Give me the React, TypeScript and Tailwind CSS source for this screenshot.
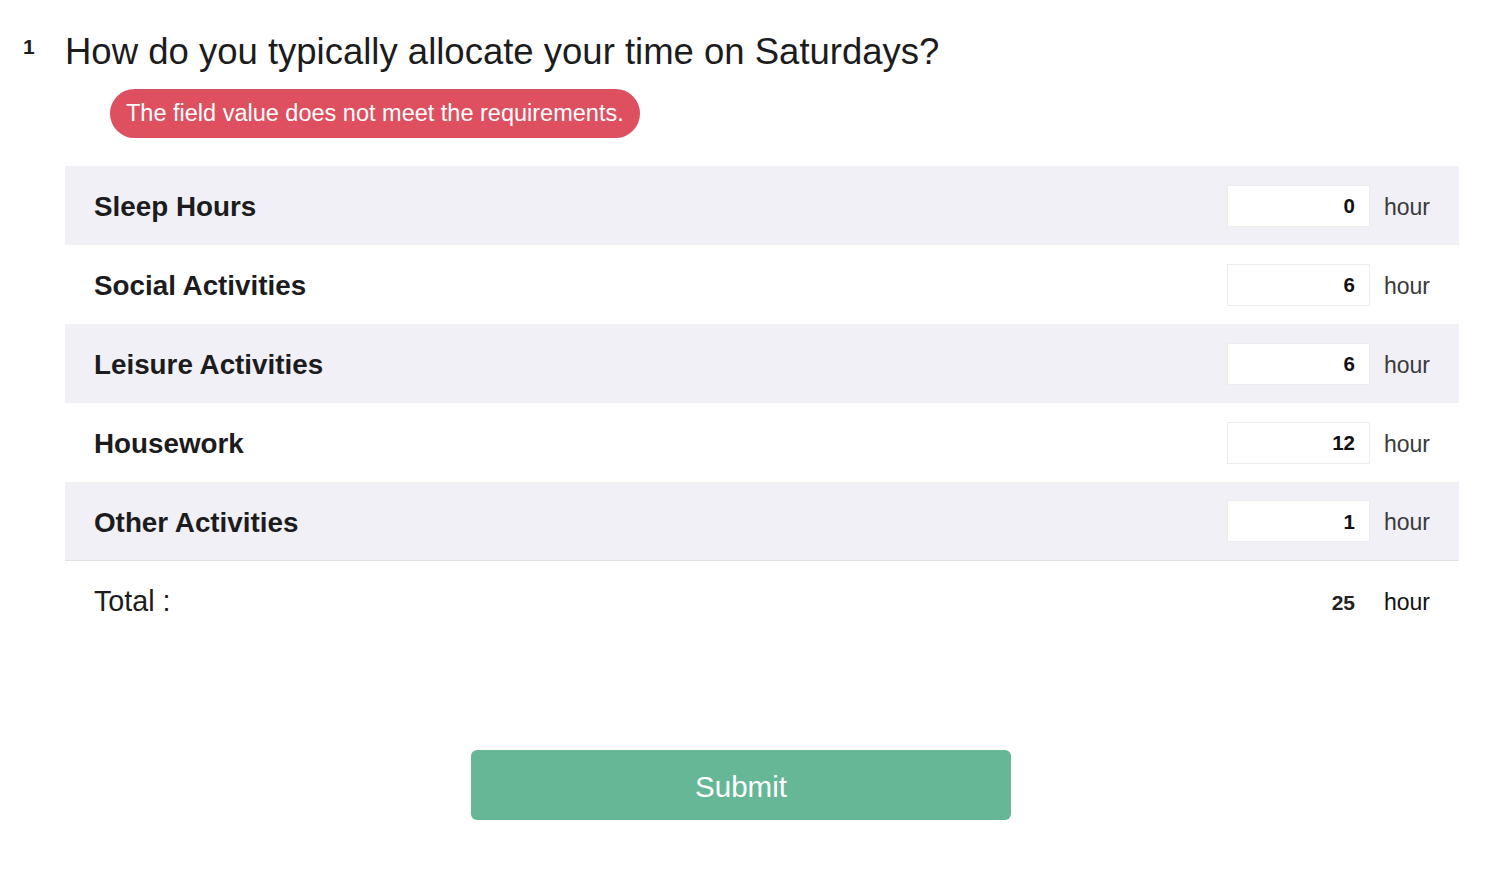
import React from "react";

const rows = [
  { label: "Sleep Hours", value: "0" },
  { label: "Social Activities", value: "6" },
  { label: "Leisure Activities", value: "6" },
  { label: "Housework", value: "12" },
  { label: "Other Activities", value: "1" },
];

export default function App() {
  return (
    <div className="min-h-[872px] bg-white font-['Liberation_Sans',Arial,sans-serif] text-[#1c1c1e]">
      <div className="flex pt-[30px]">
        <div className="w-[65px] shrink-0 pl-[23px] pt-[6px] text-[21px] font-bold leading-none">1</div>
        <div className="flex-1 pr-[41px]">
          <h1 className="text-[36.5px] leading-[44px]">How do you typically allocate your time on Saturdays?</h1>
          <div className="ml-[45px] mt-[15px] inline-flex h-[49px] items-center rounded-full bg-[#de4f60] px-[16px] text-[23.5px] text-white">
            The field value does not meet the requirements.
          </div>

          <div className="mt-[28px]">
            {rows.map((row, i) => (
              <div
                key={row.label}
                className={
                  "flex h-[79px] items-center pl-[29px] pr-[28px] " +
                  (i % 2 === 0 ? "bg-[#f1f0f6]" : "bg-white") +
                  (i === rows.length - 1 ? " border-b border-[#e2e2e6]" : "")
                }
              >
                <div className="flex-1 pt-[3px] text-[27.8px] font-bold">{row.label}</div>
                <input
                  readOnly
                  value={row.value}
                  className="h-[42px] w-[143px] border border-[#ececf0] bg-white px-[14px] pt-[1px] text-right text-[20.5px] font-bold text-[#111]"
                />
                <div className="ml-[14px] w-[47px] pt-[3px] text-[23px] text-[#3a3a3c]">hour</div>
              </div>
            ))}
            <div className="flex h-[80px] items-center pl-[29px] pr-[28px]">
              <div className="flex-1 pt-[2px] text-[28.7px]">Total :</div>
              <div className="mr-[29px] pt-[3px] text-[21px] font-bold text-[#222]">25</div>
              <div className="w-[47px] pt-[3px] text-[23px] text-[#111]">hour</div>
            </div>
          </div>
        </div>
      </div>

      <div className="mt-[109px] flex justify-center pr-[18px]">
        <button className="h-[70px] w-[540px] rounded-[6px] bg-[#65b795] pt-[4px] text-[29.5px] text-white">Submit</button>
      </div>
    </div>
  );
}
